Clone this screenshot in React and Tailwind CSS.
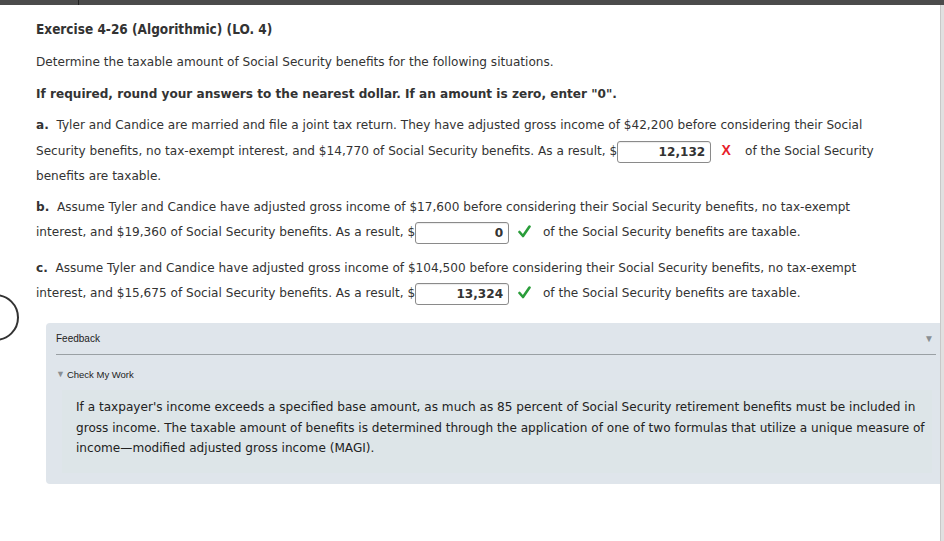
const Answer = ({ value, mark }) => (
  <>
    <span className="inline-block align-middle w-[94px] h-[22px] border border-[#8a8a8a] rounded-[3px] bg-white text-right pr-[5px] font-bold leading-[20px] text-[#333] shadow-[inset_0_1px_1px_rgba(0,0,0,0.08)]">
      {value}
    </span>
    {mark === 'wrong' ? (
      <span className="inline-block w-[30px] text-center text-[#e8202a] font-bold text-[14px] font-['Liberation_Sans',sans-serif]">X</span>
    ) : (
      <span className="inline-block w-[30px] text-center align-middle">
        <svg width="13" height="13" viewBox="0 0 13 13" className="inline-block -mt-[3px]">
          <path d="M1.5 7 L5 11 L11.5 1.5" fill="none" stroke="#2a9d3a" strokeWidth="2.6" strokeLinecap="round" strokeLinejoin="round" />
        </svg>
      </span>
    )}
  </>
);

export default function App() {
  return (
    <div className="relative w-[944px] h-[541px] bg-white overflow-hidden font-['DejaVu_Sans',Verdana,sans-serif] text-[12.1px] text-[#333]">
      {/* top bar */}
      <div className="h-[5px] bg-[#4b4b4b] flex">
        <div className="w-[79px] border-r border-[#222]" />
      </div>
      <div className="absolute right-0 top-[5px] bottom-0 w-[4px] bg-[#e0e0e0] border-l border-[#c8c8c8]" />

      {/* half circle on left edge */}
      <div className="absolute -left-[28px] top-[294px] w-[47px] h-[47px] rounded-full border-[2.5px] border-[#333]" />

      <div className="pl-[36px] pr-[60px]">
        <h2 className="pt-[15px] font-['DejaVu_Sans_Condensed','DejaVu_Sans',sans-serif] font-bold text-[13.5px] text-[#333] leading-[18px]">
          Exercise 4-26 (Algorithmic) (LO. 4)
        </h2>
        <p className="mt-[14px] leading-[20px]">Determine the taxable amount of Social Security benefits for the following situations.</p>
        <p className="mt-[12px] leading-[20px] font-bold">If required, round your answers to the nearest dollar. If an amount is zero, enter "0".</p>

        <p className="mt-[9px] leading-[25px]">
          <b>a.</b>&nbsp; Tyler and Candice are married and file a joint tax return. They have adjusted gross income of $42,200 before considering their Social Security benefits, no tax-exempt interest, and $14,770 of Social Security benefits. As a result, $
          <Answer value="12,132" mark="wrong" /> of the Social Security benefits are taxable.
        </p>

        <p className="mt-[6px] leading-[25px]">
          <b>b.</b>&nbsp; Assume Tyler and Candice have adjusted gross income of $17,600 before considering their Social Security benefits, no tax-exempt interest, and $19,360 of Social Security benefits. As a result, $
          <Answer value="0" mark="right" /> of the Social Security benefits are taxable.
        </p>

        <p className="mt-[11px] leading-[25px]">
          <b>c.</b>&nbsp; Assume Tyler and Candice have adjusted gross income of $104,500 before considering their Social Security benefits, no tax-exempt interest, and $15,675 of Social Security benefits. As a result, $
          <Answer value="13,324" mark="right" /> of the Social Security benefits are taxable.
        </p>
      </div>

      {/* feedback panel */}
      <div className="absolute left-[46px] top-[323px] w-[894px] h-[161px] bg-[#dfe5eb] rounded-l-[4px] font-['Liberation_Sans',Arial,sans-serif]">
        <div className="flex items-start justify-between ml-[10px] mr-[4px] pt-[10px] pr-[2px] h-[32px] border-b border-[#9aa0a4]">
          <span className="text-[10px] leading-[11px] text-[#222]">Feedback</span>
          <span className="text-[10px] leading-[11px] text-[#8a8f94]">▼</span>
        </div>
        <div className="ml-[10px] mt-[13px] flex items-center gap-[2px] text-[9.5px] text-[#222]">
          <span className="text-[9px] text-[#8a8f94]">▼</span>
          <span>Check My Work</span>
        </div>
        <div className="ml-[16px] mr-[8px] mt-[8px] pl-[14px] pt-[7px] pb-[14px] bg-[#dde5e8] font-['DejaVu_Sans',Verdana,sans-serif] text-[12.1px] leading-[20.5px] text-[#222]">
          If a taxpayer's income exceeds a specified base amount, as much as 85 percent of Social Security retirement benefits must be included in gross income. The taxable amount of benefits is determined through the application of one of two formulas that utilize a unique measure of income—modified adjusted gross income (MAGI).
        </div>
      </div>
    </div>
  );
}
